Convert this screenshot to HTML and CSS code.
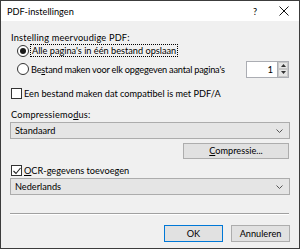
FILE: index.html
```html
<html>

<head>
    <title>PDF-instellingen</title>
    <link rel="stylesheet" href="styles.css">
</head>

<body>
    <div class="dialog">
        <div class="titlebar">
            <div class="title">PDF-instellingen</div>
            <div class="help">?</div>
            <div class="close">
                <svg width="10" height="10" viewBox="0 0 10 10"><path d="M0.5 0.5 L9.5 9.5 M9.5 0.5 L0.5 9.5" stroke="#111" stroke-width="1" fill="none"/></svg>
            </div>
        </div>
        <div class="content">
            <div class="label row-group">Instelling meervoudige PDF:</div>
            <div class="option row-radio1">
                <span class="radio checked"></span>
                <span class="focus">Alle pagina's in één bestand opslaan</span>
            </div>
            <div class="option row-radio2">
                <span class="radio"></span>
                <span class="tight">Be<u>s</u>tand maken voor elk opgegeven aantal pagina's</span>
                <div class="spinner">
                    <div class="spin-value">1</div>
                    <div class="spin-buttons">
                        <div class="spin-btn"><svg width="5" height="3" viewBox="0 0 5 3"><path d="M0 3 L2.5 0 L5 3 Z" fill="#333"/></svg></div>
                        <div class="spin-btn"><svg width="5" height="3" viewBox="0 0 5 3"><path d="M0 0 L2.5 3 L5 0 Z" fill="#333"/></svg></div>
                    </div>
                </div>
            </div>
            <div class="option row-check1">
                <span class="check"></span>
                <span>Een bestand maken dat compatibel is met PDF/A</span>
            </div>
            <div class="label row-label2">Compressiemo<u>d</u>us:</div>
            <div class="combo row-combo1">
                <span>Standaard</span>
                <svg width="7" height="4" viewBox="0 0 7 4"><path d="M0.5 0.5 L3.5 3.5 L6.5 0.5" stroke="#555" fill="none"/></svg>
            </div>
            <div class="row-btn">
                <button class="btn btn-compress"><u>C</u>ompressie...</button>
            </div>
            <div class="option row-check2">
                <span class="check checked">
                    <svg width="8" height="8" viewBox="0 0 8 8"><path d="M0.5 4 L3 6.5 L7.5 1" stroke="#222" stroke-width="1.1" fill="none"/></svg>
                </span>
                <span><u>O</u>CR-gegevens toevoegen</span>
            </div>
            <div class="combo row-combo2">
                <span>Nederlands</span>
                <svg width="7" height="4" viewBox="0 0 7 4"><path d="M0.5 0.5 L3.5 3.5 L6.5 0.5" stroke="#555" fill="none"/></svg>
            </div>
            <div class="separator"></div>
            <div class="footer">
                <button class="btn btn-ok">OK</button>
                <button class="btn">Annuleren</button>
            </div>
        </div>
    </div>
</body>

</html>
```

FILE: styles.css
```css
body {
    margin: 0;
    font-family: Lato, 'Noto Sans', sans-serif;
    font-size: 9.2px;
    color: #000;
}

.dialog {
    width: 300px;
    height: 249px;
    box-sizing: border-box;
    border: 1px solid #3c3c3c;
    background-color: #f0f0f0;
    display: flex;
    flex-direction: column;
}

.titlebar {
    height: 20px;
    background-color: #fff;
    display: flex;
    align-items: center;
    font-size: 9.2px;
}

.title {
    flex: 1;
    padding-left: 6px;
}

.help {
    width: 14px;
    margin-right: 17px;
    text-align: center;
}

.close {
    width: 10px;
    height: 10px;
    margin-right: 10px;
}

.content {
    padding: 0 9px 0 9px;
    display: flex;
    flex-direction: column;
}

.label {
    height: 13px;
    line-height: 13px;
    padding-left: 1px;
    white-space: nowrap;
    letter-spacing: 0.2px;
}

.option {
    display: flex;
    align-items: center;
    white-space: nowrap;
}

.tight {
    letter-spacing: -0.2px;
}

.row-group {
    margin-top: 10px;
}

.row-radio1 {
    height: 13px;
    padding-left: 7px;
}

.row-radio2 {
    height: 18px;
    margin-top: 3px;
    padding-left: 7px;
}

.row-check1 {
    height: 13px;
    margin-top: 9px;
    padding-left: 1px;
}

.row-label2 {
    margin-top: 8px;
}

.row-combo1 {
    margin-top: 1px;
}

.row-check2 {
    height: 13px;
    margin-top: 5px;
    padding-left: 1px;
}

.row-combo2 {
    margin-top: 1px;
}

.radio {
    width: 10px;
    height: 10px;
    border: 1px solid #333;
    border-radius: 50%;
    background-color: #fff;
    margin-right: 2px;
    position: relative;
    flex: none;
}

.radio.checked::after {
    content: "";
    position: absolute;
    left: 2px;
    top: 2px;
    width: 6px;
    height: 6px;
    border-radius: 50%;
    background-color: #1a1a1a;
}

.focus {
    outline: 1px dotted #000;
    line-height: 11px;
    padding: 0 1px;
}

.check {
    width: 9px;
    height: 9px;
    border: 1px solid #333;
    background-color: #fff;
    margin-right: 2px;
    display: flex;
    align-items: center;
    justify-content: center;
    flex: none;
}

.spinner {
    margin-left: auto;
    margin-right: 1px;
    width: 43px;
    height: 17px;
    display: flex;
    flex: none;
}

.spin-value {
    flex: 1;
    background-color: #fff;
    border: 1px solid #abadb3;
    text-align: right;
    padding-right: 4px;
    line-height: 15px;
    font-size: 9.6px;
}

.spin-buttons {
    width: 10px;
    display: flex;
    flex-direction: column;
    border: 1px solid #abadb3;
    border-left: none;
}

.spin-btn {
    flex: 1;
    background-color: #e6e6e6;
    border: 1px solid #c8c8c8;
    display: flex;
    align-items: center;
    justify-content: center;
}

.combo {
    height: 17px;
    box-sizing: border-box;
    background-color: #e5e5e5;
    border: 1px solid #acacac;
    display: flex;
    align-items: center;
    justify-content: space-between;
    padding: 0 6px 0 4px;
}

.row-btn {
    display: flex;
    justify-content: flex-end;
    margin-top: 4px;
    padding-right: 1px;
}

.btn {
    font-family: Lato, 'Noto Sans', sans-serif;
    font-size: 9.2px;
    color: #000;
    background-color: #e1e1e1;
    border: 1px solid #adadad;
    height: 16px;
    padding: 0;
    box-sizing: border-box;
    line-height: 14px;
}

.btn-compress {
    width: 106px;
}

.separator {
    margin-top: 18px;
    height: 1px;
    background-color: #a0a0a0;
    border-bottom: 1px solid #fff;
    margin-right: 1px;
}

.footer {
    display: flex;
    justify-content: flex-end;
    gap: 8px;
    margin-top: 10px;
}

.footer .btn {
    width: 59px;
    height: 17px;
}

.btn-ok {
    border-color: #0078d7;
}
```
